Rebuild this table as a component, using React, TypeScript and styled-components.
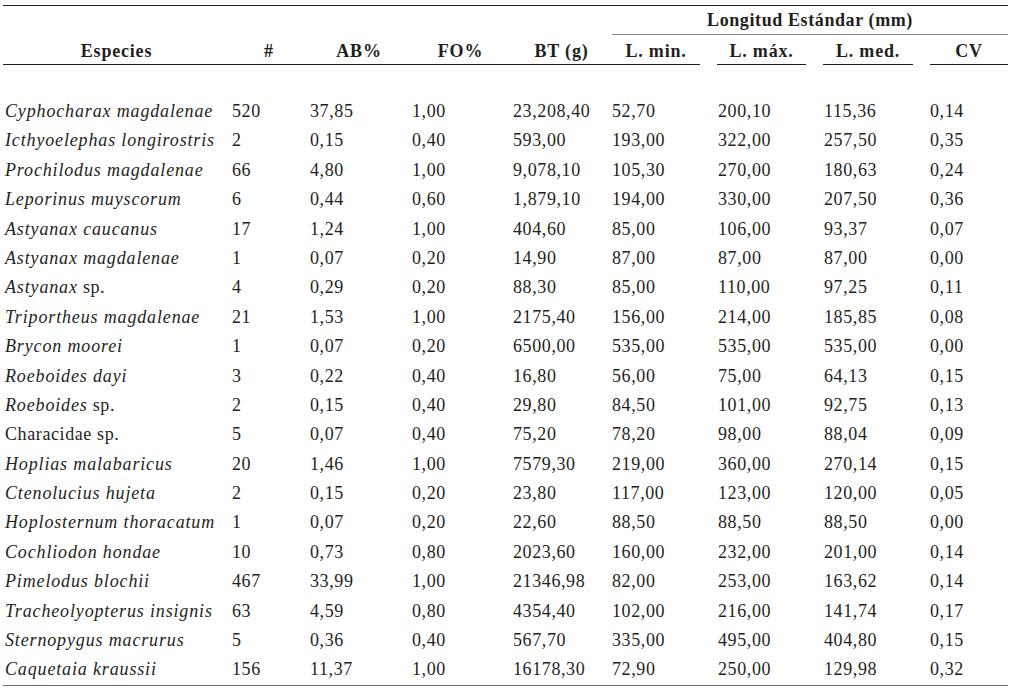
import React from 'react'
import styled, { createGlobalStyle } from 'styled-components'

const GlobalStyle = createGlobalStyle`
    html, body {
        margin: 0;
        padding: 0;
        background: #ffffff;
    }
    body {
        font-family: "Liberation Serif", "Times New Roman", serif;
        color: #231f20;
    }
`

const COLUMNS = '227px 78px 102px 101px 101px 105px 106px 107px 78px'

const TableWrapper = styled.div`
    width: 1005px;
    margin: 5px 0 0 3px;
    border-top: 1px solid #231f20;
    font-size: 18px;
    letter-spacing: 0.6px;
`

const Head = styled.div`
    display: grid;
    grid-template-columns: ${COLUMNS};
    grid-template-rows: 29px 30px;
`

const GroupTitle = styled.div`
    grid-column: 6 / 10;
    grid-row: 1;
    border-bottom: 1px solid #8a8a8a;
    font-weight: 700;
    text-align: center;
    line-height: 28px;
`

const HeadCell = styled.div<{ $col: number; $span?: boolean; $gap?: number }>`
    grid-column: ${p => p.$col};
    grid-row: ${p => (p.$span ? '1 / 3' : '2')};
    align-self: end;
    margin-right: ${p => p.$gap ?? 0}px;
    padding-top: 3px;
    border-bottom: 1px solid #231f20;
    font-weight: 700;
    letter-spacing: 0.8px;
    text-align: center;
    line-height: 26px;
`

const Body = styled.div`
    padding-top: 32px;
    border-bottom: 1px solid #6e6e6e;
`

const Row = styled.div`
    display: grid;
    grid-template-columns: ${COLUMNS};
    height: 29.4px;
    line-height: 29.4px;
    white-space: nowrap;
`

const Cell = styled.div<{ $pad?: number }>`
    padding-left: ${p => p.$pad ?? 2}px;
`

const Species = styled(Cell)<{ $upright?: boolean }>`
    font-style: ${p => (p.$upright ? 'normal' : 'italic')};
    letter-spacing: ${p => (p.$upright ? 0.6 : 0.85)}px;
`

const Upright = styled.span`
    font-style: normal;
    letter-spacing: 0.6px;
`

type Fish = {
    name: string
    sp?: boolean
    family?: boolean
    values: string[]
}

const FISH: Fish[] = [
    { name: 'Cyphocharax magdalenae', values: ['520', '37,85', '1,00', '23,208,40', '52,70', '200,10', '115,36', '0,14'] },
    { name: 'Icthyoelephas longirostris', values: ['2', '0,15', '0,40', '593,00', '193,00', '322,00', '257,50', '0,35'] },
    { name: 'Prochilodus magdalenae', values: ['66', '4,80', '1,00', '9,078,10', '105,30', '270,00', '180,63', '0,24'] },
    { name: 'Leporinus muyscorum', values: ['6', '0,44', '0,60', '1,879,10', '194,00', '330,00', '207,50', '0,36'] },
    { name: 'Astyanax caucanus', values: ['17', '1,24', '1,00', '404,60', '85,00', '106,00', '93,37', '0,07'] },
    { name: 'Astyanax magdalenae', values: ['1', '0,07', '0,20', '14,90', '87,00', '87,00', '87,00', '0,00'] },
    { name: 'Astyanax', sp: true, values: ['4', '0,29', '0,20', '88,30', '85,00', '110,00', '97,25', '0,11'] },
    { name: 'Triportheus magdalenae', values: ['21', '1,53', '1,00', '2175,40', '156,00', '214,00', '185,85', '0,08'] },
    { name: 'Brycon moorei', values: ['1', '0,07', '0,20', '6500,00', '535,00', '535,00', '535,00', '0,00'] },
    { name: 'Roeboides dayi', values: ['3', '0,22', '0,40', '16,80', '56,00', '75,00', '64,13', '0,15'] },
    { name: 'Roeboides', sp: true, values: ['2', '0,15', '0,40', '29,80', '84,50', '101,00', '92,75', '0,13'] },
    { name: 'Characidae sp.', family: true, values: ['5', '0,07', '0,40', '75,20', '78,20', '98,00', '88,04', '0,09'] },
    { name: 'Hoplias malabaricus', values: ['20', '1,46', '1,00', '7579,30', '219,00', '360,00', '270,14', '0,15'] },
    { name: 'Ctenolucius hujeta', values: ['2', '0,15', '0,20', '23,80', '117,00', '123,00', '120,00', '0,05'] },
    { name: 'Hoplosternum thoracatum', values: ['1', '0,07', '0,20', '22,60', '88,50', '88,50', '88,50', '0,00'] },
    { name: 'Cochliodon hondae', values: ['10', '0,73', '0,80', '2023,60', '160,00', '232,00', '201,00', '0,14'] },
    { name: 'Pimelodus blochii', values: ['467', '33,99', '1,00', '21346,98', '82,00', '253,00', '163,62', '0,14'] },
    { name: 'Tracheolyopterus insignis', values: ['63', '4,59', '0,80', '4354,40', '102,00', '216,00', '141,74', '0,17'] },
    { name: 'Sternopygus macrurus', values: ['5', '0,36', '0,40', '567,70', '335,00', '495,00', '404,80', '0,15'] },
    { name: 'Caquetaia kraussii', values: ['156', '11,37', '1,00', '16178,30', '72,90', '250,00', '129,98', '0,32'] },
]

// left padding of the value columns (#, AB, FO, BT, L.min, L.máx, L.med, CV)
const PADS = [2, 2, 2, 2, 0, 1, 1, 0]

const HEADERS = [
    { label: 'Especies', col: 1, span: true },
    { label: '#', col: 2, span: true },
    { label: 'AB%', col: 3, span: true },
    { label: 'FO%', col: 4, span: true },
    { label: 'BT (g)', col: 5, span: true },
    { label: 'L. min.', col: 6, gap: 17 },
    { label: 'L. máx.', col: 7, gap: 17 },
    { label: 'L. med.', col: 8, gap: 17 },
    { label: 'CV', col: 9 },
]

const App = () => {
    return (
        <>
            <GlobalStyle />
            <TableWrapper>
                <Head>
                    <GroupTitle>Longitud Estándar (mm)</GroupTitle>
                    {HEADERS.map(h => (
                        <HeadCell key={h.label} $col={h.col} $span={h.span} $gap={h.gap}>
                            {h.label}
                        </HeadCell>
                    ))}
                </Head>
                <Body>
                    {FISH.map(f => (
                        <Row key={f.name}>
                            <Species $upright={f.family}>
                                {f.name}
                                {f.sp && <Upright> sp.</Upright>}
                            </Species>
                            {f.values.map((v, i) => (
                                <Cell key={i} $pad={PADS[i]}>{v}</Cell>
                            ))}
                        </Row>
                    ))}
                </Body>
            </TableWrapper>
        </>
    )
}

export default App
